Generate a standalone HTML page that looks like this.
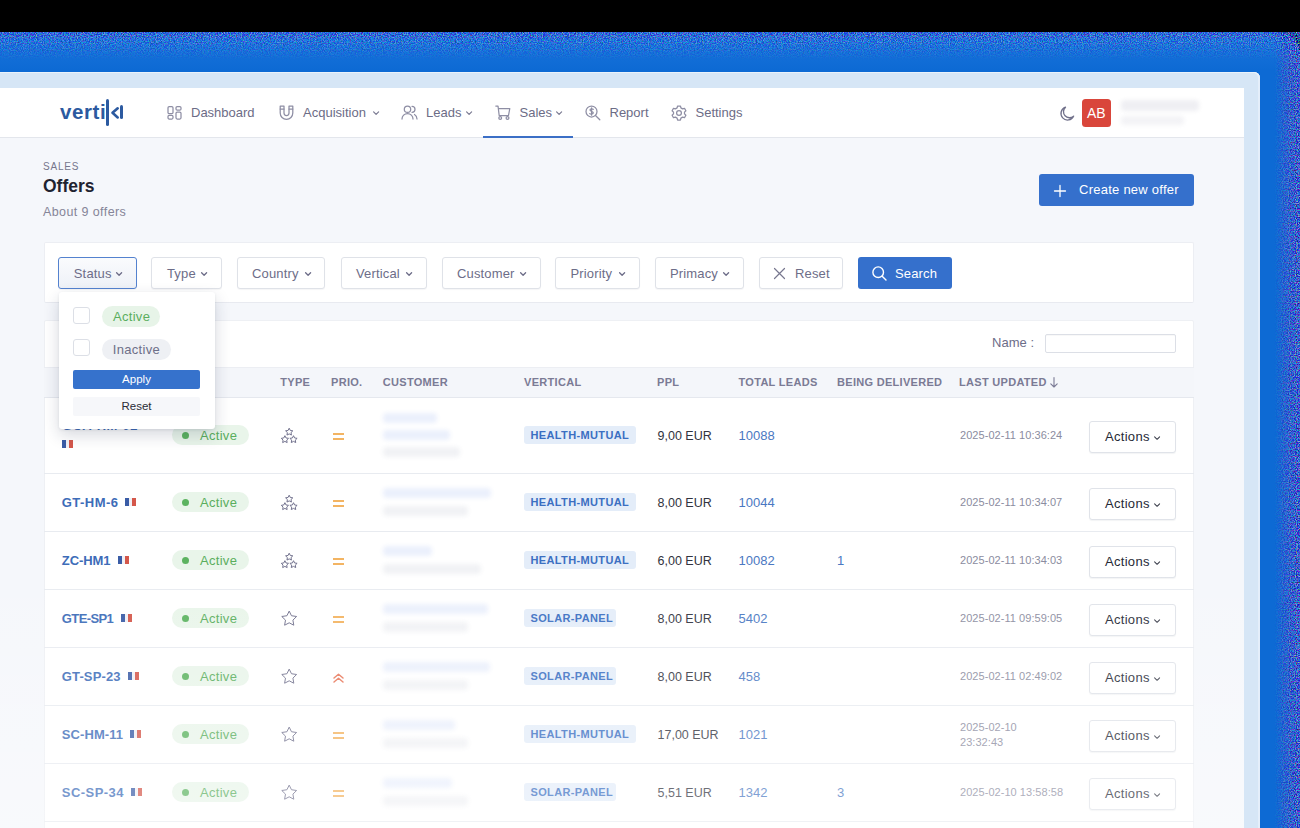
<!DOCTYPE html>
<html><head><meta charset="utf-8">
<style>
*{margin:0;padding:0;box-sizing:border-box}
html,body{width:1300px;height:828px;overflow:hidden;background:#000;font-family:"Liberation Sans",sans-serif;position:relative}
.a{position:absolute;white-space:nowrap}
#glow{left:-40px;top:32px;width:1340px;height:860px;background:linear-gradient(90deg,rgba(14,107,213,0) 0,rgba(14,107,213,0) 1316px,rgba(42,92,204,1) 1328px,rgba(58,76,192,1) 1340px),linear-gradient(180deg,#2378dd 0,#1570d9 18px,#0d6ad4 38px);border-top-right-radius:22px}
#glow2{display:none}
#glow3{left:0;top:32px;width:1300px;height:9px;background:linear-gradient(180deg,rgba(60,70,200,.5),rgba(60,70,200,0))}
#frame{left:-20px;top:72px;width:1280px;height:800px;background:#d6e6f6;border-top-right-radius:6px;box-shadow:inset 0 1px 0 #e9f2fb, inset -2px 0 0 #e4eefa}
#app{left:0;top:88px;width:1244px;height:760px;background:#f5f7fb}
#nav{left:0;top:88px;width:1244px;height:50px;background:#fff;border-bottom:1px solid #e3e6ec}
.nt{font-size:13px;line-height:16px;color:#6c6c86}
svg.ic{position:absolute;overflow:visible}
.ic *{stroke:#8e8ea4;fill:none;stroke-width:1.25;stroke-linecap:round;stroke-linejoin:round}
.chev{position:absolute;overflow:visible}
.chev *{stroke:#7a7a92;fill:none;stroke-width:1.2;stroke-linecap:round;stroke-linejoin:round}
</style>
<style>
.btn{position:absolute;height:32px;top:257px;border:1px solid #dfe2e8;border-radius:3px;background:#fff;box-shadow:0 1px 1px rgba(20,30,60,.04)}
.bt{position:absolute;font-size:13px;line-height:16px;letter-spacing:.15px;color:#6d6d88;top:265.5px}
.th{position:absolute;top:376px;font-size:11px;line-height:13px;font-weight:bold;letter-spacing:.3px;color:#7b7b95}
.nm{position:absolute;font-size:13px;line-height:16px;font-weight:bold;letter-spacing:.4px;color:#3d6cb8}
.flag{position:absolute;width:11px;height:7.5px;background:linear-gradient(90deg,#3a5ca6 0,#3a5ca6 34%,#f0f0f5 34%,#f0f0f5 66%,#d4574a 66%)}
.badge{position:absolute;left:172px;width:77px;height:20px;border-radius:10px;background:#e9f5ea}
.bdot{position:absolute;left:10px;top:6.5px;width:7px;height:7px;border-radius:50%;background:#5cb360}
.btx{position:absolute;left:28px;top:2.7px;font-size:13px;line-height:16px;letter-spacing:.3px;color:#5aae5e}
.bl{position:absolute;height:10px;border-radius:4px;filter:blur(2px)}
.tag{position:absolute;left:524px;height:18px;border-radius:3px;background:#e4edf9;font-size:11px;line-height:18px;font-weight:bold;letter-spacing:.36px;color:#3b6fc2;padding-left:6.5px}
.ppl{position:absolute;left:657.5px;font-size:12.5px;line-height:16px;color:#31333e}
.tl{position:absolute;left:738.5px;font-size:13px;line-height:16px;color:#4a78c2}
.dt{position:absolute;left:960px;font-size:11px;line-height:15px;letter-spacing:.05px;color:#8b8ca0}
.act{position:absolute;left:1089px;width:87px;height:32px;border:1px solid #e0e3e9;border-radius:3px;background:#fff;box-shadow:0 1px 1px rgba(20,30,60,.05)}
.atx{position:absolute;left:15px;top:7.6px;font-size:13px;line-height:16px;letter-spacing:.3px;color:#262936}
.rl{position:absolute;left:44px;width:1150px;height:1px;background:#e8ebf0}
</style>
</head><body>
<div id="glow" class="a"></div>
<div id="glow2" class="a"></div>
<div id="glow3" class="a"></div>
<div id="frame" class="a"></div>
<div id="app" class="a"></div>

<svg class="a" style="left:0;top:0" width="1300" height="828">
<defs>
<filter id="nz" x="0" y="0" width="100%" height="100%"><feTurbulence type="fractalNoise" baseFrequency="0.85" numOctaves="1" seed="7" result="t"/><feComponentTransfer in="t"><feFuncR type="linear" slope="5" intercept="-2.6"/><feFuncG type="linear" slope="5" intercept="-2.3"/><feFuncB type="linear" slope="4" intercept="-1.2"/><feFuncA type="linear" slope="0" intercept="1"/></feComponentTransfer></filter>
<linearGradient id="gt" x1="0" y1="0" x2="0" y2="1"><stop offset="0" stop-color="#fff" stop-opacity="0.9"/><stop offset="1" stop-color="#fff" stop-opacity="0"/></linearGradient>
<linearGradient id="gr" x1="0" y1="0" x2="1" y2="0"><stop offset="0" stop-color="#fff" stop-opacity="0"/><stop offset="1" stop-color="#fff" stop-opacity="0.9"/></linearGradient>
<mask id="mt"><rect x="0" y="32" width="1300" height="28" fill="url(#gt)"/></mask>
<mask id="mr"><rect x="1274" y="32" width="26" height="796" fill="url(#gr)"/></mask>
</defs>
<rect x="0" y="32" width="1300" height="28" filter="url(#nz)" mask="url(#mt)" opacity="0.5"/>
<rect x="1274" y="32" width="26" height="796" filter="url(#nz)" mask="url(#mr)" opacity="0.6"/>
</svg>
<!-- NAV -->
<div id="nav" class="a"></div>
<div class="a" style="left:60px;top:100px;font-size:20.5px;line-height:24px;font-weight:bold;letter-spacing:0.6px;color:#2c5aa0">verti</div>
<div class="a" style="left:106.4px;top:99.2px;width:3.1px;height:27.2px;border-radius:2px;background:#2c5aa0"></div>
<svg class="a" style="left:110.5px;top:106.5px;overflow:visible" width="10" height="14"><polyline points="6.7,1.3 1.5,5.85 6.7,10.4" fill="none" stroke="#2c5aa0" stroke-width="2.6" stroke-linecap="round" stroke-linejoin="round"/></svg>
<div class="a" style="left:120.3px;top:104.5px;width:2.7px;height:14.2px;border-radius:1.5px;background:#2c5aa0"></div>

<svg class="ic" style="left:167px;top:106px" width="15" height="14" viewBox="0 0 15 14"><rect x="1" y="0.6" width="5" height="7" rx="1.2"/><rect x="9" y="0.6" width="5" height="3.6" rx="1.2"/><rect x="1" y="9.4" width="5" height="3.6" rx="1.2"/><rect x="9" y="6" width="5" height="7" rx="1.2"/></svg>
<div class="a nt" style="left:191px;top:105px">Dashboard</div>

<svg class="ic" style="left:279px;top:105px" width="15" height="15" viewBox="0 0 15 15"><path d="M1.2,1 H5 V8 A2.5,2.5 0 0 0 10,8 V1 H13.8 V8 A6.3,6.3 0 0 1 1.2,8 Z"/><path d="M1.2,4 H5 M10,4 H13.8"/></svg>
<div class="a nt" style="left:303px;top:105px">Acquisition</div>
<svg class="chev" style="left:372.5px;top:110.5px" width="7" height="5"><polyline points="0.6,0.8 3.1,3.3 5.6,0.8"/></svg>

<svg class="ic" style="left:401px;top:105px" width="17" height="15" viewBox="0 0 17 15"><circle cx="6.5" cy="4.2" r="3.2"/><path d="M1,14 A5.5,5.5 0 0 1 12,14"/><path d="M11,1.3 A3,3 0 0 1 11,7.3 M13.5,9.5 A5.2,5.2 0 0 1 16,14"/></svg>
<div class="a nt" style="left:426px;top:105px">Leads</div>
<svg class="chev" style="left:465.5px;top:110.5px" width="7" height="5"><polyline points="0.6,0.8 3.1,3.3 5.6,0.8"/></svg>

<svg class="ic" style="left:495px;top:105px" width="16" height="15" viewBox="0 0 16 15"><path d="M0.8,1 H3 L4.2,10.5 H13.5 L14.8,3.5 H3.6"/><circle cx="5.2" cy="13" r="1.4"/><circle cx="12.5" cy="13" r="1.4"/></svg>
<div class="a nt" style="left:519.5px;top:105px">Sales</div>
<svg class="chev" style="left:555.5px;top:110.5px" width="7" height="5"><polyline points="0.6,0.8 3.1,3.3 5.6,0.8"/></svg>
<div class="a" style="left:483px;top:136px;width:90px;height:2px;background:#3b6fc6"></div>

<svg class="ic" style="left:584.5px;top:105px" width="16" height="16" viewBox="0 0 16 16"><circle cx="6.5" cy="6.5" r="5.5"/><path d="M10.5,10.5 L14.8,14.8"/><path d="M8.3,4.3 C7.8,3.6 5,3.4 5,5 C5,6.6 8.3,6 8.3,7.8 C8.3,9.5 5.3,9.3 4.8,8.6 M6.6,2.8 V10.2"/></svg>
<div class="a nt" style="left:609.5px;top:105px">Report</div>

<svg class="ic" style="left:670.5px;top:105px" width="16" height="16" viewBox="0 0 16 16"><path d="M6.6,1 H9.4 L9.9,2.9 L11.6,3.9 L13.5,3.3 L14.9,5.7 L13.5,7.1 V8.9 L14.9,10.3 L13.5,12.7 L11.6,12.1 L9.9,13.1 L9.4,15 H6.6 L6.1,13.1 L4.4,12.1 L2.5,12.7 L1.1,10.3 L2.5,8.9 V7.1 L1.1,5.7 L2.5,3.3 L4.4,3.9 L6.1,2.9 Z"/><circle cx="8" cy="8" r="2.4"/></svg>
<div class="a nt" style="left:695.5px;top:105px">Settings</div>

<svg class="ic" style="left:1059px;top:105.5px" width="16" height="16" viewBox="0 0 16 16"><path d="M6.5,1.2 A6.6,6.6 0 1 0 14.6,10.2 A5.6,5.6 0 0 1 6.5,1.2 Z" style="stroke:#70708a;stroke-width:1.3"/></svg>
<div class="a" style="left:1082px;top:98.5px;width:28.5px;height:28.5px;border-radius:3.5px;background:#d9463b;color:#fff;font-size:14px;line-height:28.5px;text-align:center">AB</div>
<div class="a" style="left:1121px;top:100px;width:78px;height:11px;border-radius:4px;background:#efeff3;filter:blur(2px)"></div>
<div class="a" style="left:1121px;top:116px;width:63px;height:9px;border-radius:4px;background:#f3f3f6;filter:blur(2px)"></div>

<div class="a" style="left:43px;top:160.5px;font-size:10px;line-height:12px;letter-spacing:.8px;color:#76768c">SALES</div>
<div class="a" style="left:43px;top:176.2px;font-size:17.5px;line-height:20px;font-weight:bold;color:#1f2330">Offers</div>
<div class="a" style="left:43px;top:204.7px;font-size:12.5px;line-height:15px;letter-spacing:.4px;color:#858598">About 9 offers</div>
<div class="a" style="left:1039px;top:174px;width:155px;height:32px;border-radius:3px;background:#3570cc"></div>
<svg class="a" style="left:1053.5px;top:184.5px;overflow:visible" width="12" height="12"><path d="M6,0.5 V11.5 M0.5,6 H11.5" stroke="#fff" stroke-width="1.3" stroke-linecap="round"/></svg>
<div class="a" style="left:1079px;top:182px;font-size:13px;line-height:16px;letter-spacing:.25px;color:#fff">Create new offer</div>
<div class="a" style="left:44px;top:242px;width:1150px;height:61px;background:#fff;border:1px solid #eceef3;border-bottom-color:#e8eaf0;border-radius:2px"></div>
<div class="btn" style="left:58px;width:79px;border-color:#5482cf;background:linear-gradient(#fafbfd,#eef1f7)"></div>
<div class="bt" style="left:73.8px">Status</div>
<svg class="a" style="left:115.5px;top:272px;overflow:visible" width="7" height="5"><polyline points="0.6,0.8 3.1,3.3 5.6,0.8" fill="none" stroke="#6d6d88" stroke-width="1.3" stroke-linecap="round" stroke-linejoin="round"/></svg>
<div class="btn" style="left:151px;width:71px"></div>
<div class="bt" style="left:167px">Type</div>
<svg class="a" style="left:200.5px;top:272px;overflow:visible" width="7" height="5"><polyline points="0.6,0.8 3.1,3.3 5.6,0.8" fill="none" stroke="#6d6d88" stroke-width="1.3" stroke-linecap="round" stroke-linejoin="round"/></svg>
<div class="btn" style="left:237px;width:88px"></div>
<div class="bt" style="left:252px">Country</div>
<svg class="a" style="left:304.5px;top:272px;overflow:visible" width="7" height="5"><polyline points="0.6,0.8 3.1,3.3 5.6,0.8" fill="none" stroke="#6d6d88" stroke-width="1.3" stroke-linecap="round" stroke-linejoin="round"/></svg>
<div class="btn" style="left:341px;width:86px"></div>
<div class="bt" style="left:356px">Vertical</div>
<svg class="a" style="left:405.5px;top:272px;overflow:visible" width="7" height="5"><polyline points="0.6,0.8 3.1,3.3 5.6,0.8" fill="none" stroke="#6d6d88" stroke-width="1.3" stroke-linecap="round" stroke-linejoin="round"/></svg>
<div class="btn" style="left:442px;width:99px"></div>
<div class="bt" style="left:457px">Customer</div>
<svg class="a" style="left:519.5px;top:272px;overflow:visible" width="7" height="5"><polyline points="0.6,0.8 3.1,3.3 5.6,0.8" fill="none" stroke="#6d6d88" stroke-width="1.3" stroke-linecap="round" stroke-linejoin="round"/></svg>
<div class="btn" style="left:555px;width:85px"></div>
<div class="bt" style="left:570.5px">Priority</div>
<svg class="a" style="left:618.5px;top:272px;overflow:visible" width="7" height="5"><polyline points="0.6,0.8 3.1,3.3 5.6,0.8" fill="none" stroke="#6d6d88" stroke-width="1.3" stroke-linecap="round" stroke-linejoin="round"/></svg>
<div class="btn" style="left:655px;width:89px"></div>
<div class="bt" style="left:670px">Primacy</div>
<svg class="a" style="left:722.5px;top:272px;overflow:visible" width="7" height="5"><polyline points="0.6,0.8 3.1,3.3 5.6,0.8" fill="none" stroke="#6d6d88" stroke-width="1.3" stroke-linecap="round" stroke-linejoin="round"/></svg>
<div class="btn" style="left:759px;width:84px"></div>
<svg class="a" style="left:774px;top:267.5px;overflow:visible" width="11" height="11"><path d="M0.5,0.5 L10.5,10.5 M10.5,0.5 L0.5,10.5" stroke="#77778f" stroke-width="1.2" stroke-linecap="round"/></svg>
<div class="bt" style="left:795px">Reset</div>
<div class="a" style="left:858px;top:257px;width:94px;height:32px;border-radius:3px;background:#3570cc"></div>
<svg class="a" style="left:871.5px;top:265.5px;overflow:visible" width="15" height="15"><circle cx="6.2" cy="6.2" r="5.3" fill="none" stroke="#fff" stroke-width="1.4"/><path d="M10.2,10.2 L14,14" stroke="#fff" stroke-width="1.4" stroke-linecap="round"/></svg>
<div class="bt" style="left:895px;color:#fff">Search</div>
<div class="a" style="left:44px;top:320px;width:1150px;height:520px;background:#fff;border:1px solid #eef0f4;border-radius:2px"></div>
<div class="a" style="left:992px;top:335px;font-size:13px;line-height:16px;letter-spacing:.05px;color:#6d6d88">Name :</div>
<div class="a" style="left:1045px;top:334px;width:131px;height:19px;border:1px solid #dcdfe6;border-radius:2px;background:#fff;box-shadow:inset 0 1px 1px rgba(0,0,0,.03)"></div>
<div class="a" style="left:44px;top:367px;width:1150px;height:31px;background:#f4f6fa;border-top:1px solid #eceef3;border-bottom:1px solid #e5e8ee"></div>
<div class="th" style="left:280.3px">TYPE</div>
<div class="th" style="left:331px">PRIO.</div>
<div class="th" style="left:382.8px">CUSTOMER</div>
<div class="th" style="left:524px">VERTICAL</div>
<div class="th" style="left:657px">PPL</div>
<div class="th" style="left:738.5px">TOTAL LEADS</div>
<div class="th" style="left:837px">BEING DELIVERED</div>
<div class="th" style="left:959px">LAST UPDATED</div>
<svg class="a" style="left:1050px;top:376.5px;overflow:visible" width="8" height="11"><path d="M4,0.5 V10 M0.8,6.8 L4,10 L7.2,6.8" fill="none" stroke="#7b7b95" stroke-width="1.1" stroke-linecap="round" stroke-linejoin="round"/></svg>
<div class="rl" style="top:473px"></div>
<div class="rl" style="top:531px"></div>
<div class="rl" style="top:589px"></div>
<div class="rl" style="top:647px"></div>
<div class="rl" style="top:705px"></div>
<div class="rl" style="top:763px"></div>
<div class="rl" style="top:821px"></div>
<div class="nm" style="left:62px;top:418px">GCA-HM-02</div>
<div class="flag" style="left:62.2px;top:440px"></div>
<div class="badge" style="top:425px"><div class="bdot"></div><div class="btx">Active</div></div>
<svg class="a" style="left:280.5px;top:427.5px;overflow:visible" width="17" height="16"><path d="M8.20,0.20 L9.32,2.46 L11.81,2.83 L10.01,4.59 L10.43,7.07 L8.20,5.90 L5.97,7.07 L6.39,4.59 L4.59,2.83 L7.08,2.46 Z M3.90,7.70 L5.02,9.96 L7.51,10.33 L5.71,12.09 L6.13,14.57 L3.90,13.40 L1.67,14.57 L2.09,12.09 L0.29,10.33 L2.78,9.96 Z M12.50,7.70 L13.62,9.96 L16.11,10.33 L14.31,12.09 L14.73,14.57 L12.50,13.40 L10.27,14.57 L10.69,12.09 L8.89,10.33 L11.38,9.96 Z" fill="none" stroke="#72728e" stroke-width="1.0" stroke-linejoin="round"/></svg>
<div class="a" style="left:333px;top:433.3px;width:11px;height:1.5px;background:#f3b462"></div>
<div class="a" style="left:333px;top:438.4px;width:11px;height:1.5px;background:#f3b462"></div>
<div class="bl" style="left:383px;top:412.5px;width:54px;background:#ebf0fc"></div>
<div class="bl" style="left:383px;top:430px;width:67px;background:#ebf0fc"></div>
<div class="bl" style="left:383px;top:447px;width:77px;background:#f1f2f5"></div>
<div class="tag" style="top:426px;width:112px">HEALTH-MUTUAL</div>
<div class="ppl" style="top:427.5px">9,00 EUR</div>
<div class="tl" style="top:427.5px">10088</div>
<div class="dt" style="top:428.2px">2025-02-11 10:36:24</div>
<div class="act" style="top:420.5px"><div class="atx">Actions</div></div>
<svg class="a" style="left:1154.2px;top:436.4px;overflow:visible" width="7" height="5"><polyline points="0.6,0.8 3.1,3.3 5.6,0.8" fill="none" stroke="#3a3d4a" stroke-width="1.05" stroke-linecap="round" stroke-linejoin="round"/></svg>
<div class="nm" style="left:61.8px;top:494.5px;letter-spacing:0.46px">GT-HM-6</div>
<div class="flag" style="left:125.2px;top:498.3px"></div>
<div class="badge" style="top:492px"><div class="bdot"></div><div class="btx">Active</div></div>
<svg class="a" style="left:280.5px;top:494.5px;overflow:visible" width="17" height="16"><path d="M8.20,0.20 L9.32,2.46 L11.81,2.83 L10.01,4.59 L10.43,7.07 L8.20,5.90 L5.97,7.07 L6.39,4.59 L4.59,2.83 L7.08,2.46 Z M3.90,7.70 L5.02,9.96 L7.51,10.33 L5.71,12.09 L6.13,14.57 L3.90,13.40 L1.67,14.57 L2.09,12.09 L0.29,10.33 L2.78,9.96 Z M12.50,7.70 L13.62,9.96 L16.11,10.33 L14.31,12.09 L14.73,14.57 L12.50,13.40 L10.27,14.57 L10.69,12.09 L8.89,10.33 L11.38,9.96 Z" fill="none" stroke="#72728e" stroke-width="1.0" stroke-linejoin="round"/></svg>
<div class="a" style="left:333px;top:500.3px;width:11px;height:1.5px;background:#f3b462"></div>
<div class="a" style="left:333px;top:505.4px;width:11px;height:1.5px;background:#f3b462"></div>
<div class="bl" style="left:383px;top:488.3px;width:108px;background:#ebf0fc"></div>
<div class="bl" style="left:383px;top:506.3px;width:85px;background:#f1f2f5"></div>
<div class="tag" style="top:493px;width:112px">HEALTH-MUTUAL</div>
<div class="ppl" style="top:494.5px">8,00 EUR</div>
<div class="tl" style="top:494.5px">10044</div>
<div class="dt" style="top:495.2px">2025-02-11 10:34:07</div>
<div class="act" style="top:487.5px"><div class="atx">Actions</div></div>
<svg class="a" style="left:1154.2px;top:503.4px;overflow:visible" width="7" height="5"><polyline points="0.6,0.8 3.1,3.3 5.6,0.8" fill="none" stroke="#3a3d4a" stroke-width="1.05" stroke-linecap="round" stroke-linejoin="round"/></svg>
<div class="nm" style="left:61.8px;top:552.5px;letter-spacing:-0.06px">ZC-HM1</div>
<div class="flag" style="left:117.8px;top:556.3px"></div>
<div class="badge" style="top:550px"><div class="bdot"></div><div class="btx">Active</div></div>
<svg class="a" style="left:280.5px;top:552.5px;overflow:visible" width="17" height="16"><path d="M8.20,0.20 L9.32,2.46 L11.81,2.83 L10.01,4.59 L10.43,7.07 L8.20,5.90 L5.97,7.07 L6.39,4.59 L4.59,2.83 L7.08,2.46 Z M3.90,7.70 L5.02,9.96 L7.51,10.33 L5.71,12.09 L6.13,14.57 L3.90,13.40 L1.67,14.57 L2.09,12.09 L0.29,10.33 L2.78,9.96 Z M12.50,7.70 L13.62,9.96 L16.11,10.33 L14.31,12.09 L14.73,14.57 L12.50,13.40 L10.27,14.57 L10.69,12.09 L8.89,10.33 L11.38,9.96 Z" fill="none" stroke="#72728e" stroke-width="1.0" stroke-linejoin="round"/></svg>
<div class="a" style="left:333px;top:558.3px;width:11px;height:1.5px;background:#f3b462"></div>
<div class="a" style="left:333px;top:563.4px;width:11px;height:1.5px;background:#f3b462"></div>
<div class="bl" style="left:383px;top:546.3px;width:49px;background:#ebf0fc"></div>
<div class="bl" style="left:383px;top:564.3px;width:98px;background:#f1f2f5"></div>
<div class="tag" style="top:551px;width:112px">HEALTH-MUTUAL</div>
<div class="ppl" style="top:552.5px">6,00 EUR</div>
<div class="tl" style="top:552.5px">10082</div>
<div class="tl" style="left:837px;top:552.5px">1</div>
<div class="dt" style="top:553.2px">2025-02-11 10:34:03</div>
<div class="act" style="top:545.5px"><div class="atx">Actions</div></div>
<svg class="a" style="left:1154.2px;top:561.4px;overflow:visible" width="7" height="5"><polyline points="0.6,0.8 3.1,3.3 5.6,0.8" fill="none" stroke="#3a3d4a" stroke-width="1.05" stroke-linecap="round" stroke-linejoin="round"/></svg>
<div class="nm" style="left:61.8px;top:610.5px;letter-spacing:-0.6px">GTE-SP1</div>
<div class="flag" style="left:121.0px;top:614.3px"></div>
<div class="badge" style="top:608px"><div class="bdot"></div><div class="btx">Active</div></div>
<svg class="a" style="left:280.5px;top:610px;overflow:visible" width="17" height="16"><path d="M8.20,1.10 L10.49,5.74 L15.62,6.49 L11.91,10.11 L12.78,15.21 L8.20,12.80 L3.62,15.21 L4.49,10.11 L0.78,6.49 L5.91,5.74 Z" fill="none" stroke="#72728e" stroke-width="1.0" stroke-linejoin="round"/></svg>
<div class="a" style="left:333px;top:616.3px;width:11px;height:1.5px;background:#f3b462"></div>
<div class="a" style="left:333px;top:621.4px;width:11px;height:1.5px;background:#f3b462"></div>
<div class="bl" style="left:383px;top:604.3px;width:105px;background:#ebf0fc"></div>
<div class="bl" style="left:383px;top:622.3px;width:85px;background:#f1f2f5"></div>
<div class="tag" style="top:609px;width:92px">SOLAR-PANEL</div>
<div class="ppl" style="top:610.5px">8,00 EUR</div>
<div class="tl" style="top:610.5px">5402</div>
<div class="dt" style="top:611.2px">2025-02-11 09:59:05</div>
<div class="act" style="top:603.5px"><div class="atx">Actions</div></div>
<svg class="a" style="left:1154.2px;top:619.4px;overflow:visible" width="7" height="5"><polyline points="0.6,0.8 3.1,3.3 5.6,0.8" fill="none" stroke="#3a3d4a" stroke-width="1.05" stroke-linecap="round" stroke-linejoin="round"/></svg>
<div class="nm" style="left:61.8px;top:668.5px;letter-spacing:0.13px">GT-SP-23</div>
<div class="flag" style="left:127.7px;top:672.3px"></div>
<div class="badge" style="top:666px"><div class="bdot"></div><div class="btx">Active</div></div>
<svg class="a" style="left:280.5px;top:668px;overflow:visible" width="17" height="16"><path d="M8.20,1.10 L10.49,5.74 L15.62,6.49 L11.91,10.11 L12.78,15.21 L8.20,12.80 L3.62,15.21 L4.49,10.11 L0.78,6.49 L5.91,5.74 Z" fill="none" stroke="#72728e" stroke-width="1.0" stroke-linejoin="round"/></svg>
<svg class="a" style="left:333px;top:672.5px;overflow:visible" width="11" height="10"><path d="M1,5 L5.5,1.2 L10,5 M1,9 L5.5,5.2 L10,9" fill="none" stroke="#e8775a" stroke-width="1.5" stroke-linecap="round" stroke-linejoin="round"/></svg>
<div class="bl" style="left:383px;top:662.3px;width:107px;background:#ebf0fc"></div>
<div class="bl" style="left:383px;top:680.3px;width:85px;background:#f1f2f5"></div>
<div class="tag" style="top:667px;width:92px">SOLAR-PANEL</div>
<div class="ppl" style="top:668.5px">8,00 EUR</div>
<div class="tl" style="top:668.5px">458</div>
<div class="dt" style="top:669.2px">2025-02-11 02:49:02</div>
<div class="act" style="top:661.5px"><div class="atx">Actions</div></div>
<svg class="a" style="left:1154.2px;top:677.4px;overflow:visible" width="7" height="5"><polyline points="0.6,0.8 3.1,3.3 5.6,0.8" fill="none" stroke="#3a3d4a" stroke-width="1.05" stroke-linecap="round" stroke-linejoin="round"/></svg>
<div class="nm" style="left:61.8px;top:726.5px;letter-spacing:0.09px">SC-HM-11</div>
<div class="flag" style="left:130.3px;top:730.3px"></div>
<div class="badge" style="top:724px"><div class="bdot"></div><div class="btx">Active</div></div>
<svg class="a" style="left:280.5px;top:726px;overflow:visible" width="17" height="16"><path d="M8.20,1.10 L10.49,5.74 L15.62,6.49 L11.91,10.11 L12.78,15.21 L8.20,12.80 L3.62,15.21 L4.49,10.11 L0.78,6.49 L5.91,5.74 Z" fill="none" stroke="#72728e" stroke-width="1.0" stroke-linejoin="round"/></svg>
<div class="a" style="left:333px;top:732.3px;width:11px;height:1.5px;background:#f3b462"></div>
<div class="a" style="left:333px;top:737.4px;width:11px;height:1.5px;background:#f3b462"></div>
<div class="bl" style="left:383px;top:720.3px;width:72px;background:#ebf0fc"></div>
<div class="bl" style="left:383px;top:738.3px;width:85px;background:#f1f2f5"></div>
<div class="tag" style="top:725px;width:112px">HEALTH-MUTUAL</div>
<div class="ppl" style="top:726.5px">17,00 EUR</div>
<div class="tl" style="top:726.5px">1021</div>
<div class="dt" style="top:719.5px">2025-02-10<br>23:32:43</div>
<div class="act" style="top:719.5px"><div class="atx">Actions</div></div>
<svg class="a" style="left:1154.2px;top:735.4px;overflow:visible" width="7" height="5"><polyline points="0.6,0.8 3.1,3.3 5.6,0.8" fill="none" stroke="#3a3d4a" stroke-width="1.05" stroke-linecap="round" stroke-linejoin="round"/></svg>
<div class="nm" style="left:61.8px;top:784.5px;letter-spacing:0.45px">SC-SP-34</div>
<div class="flag" style="left:130.7px;top:788.3px"></div>
<div class="badge" style="top:782px"><div class="bdot"></div><div class="btx">Active</div></div>
<svg class="a" style="left:280.5px;top:784px;overflow:visible" width="17" height="16"><path d="M8.20,1.10 L10.49,5.74 L15.62,6.49 L11.91,10.11 L12.78,15.21 L8.20,12.80 L3.62,15.21 L4.49,10.11 L0.78,6.49 L5.91,5.74 Z" fill="none" stroke="#72728e" stroke-width="1.0" stroke-linejoin="round"/></svg>
<div class="a" style="left:333px;top:790.3px;width:11px;height:1.5px;background:#f3b462"></div>
<div class="a" style="left:333px;top:795.4px;width:11px;height:1.5px;background:#f3b462"></div>
<div class="bl" style="left:383px;top:778.3px;width:69px;background:#ebf0fc"></div>
<div class="bl" style="left:383px;top:796.3px;width:85px;background:#f1f2f5"></div>
<div class="tag" style="top:783px;width:92px">SOLAR-PANEL</div>
<div class="ppl" style="top:784.5px">5,51 EUR</div>
<div class="tl" style="top:784.5px">1342</div>
<div class="tl" style="left:837px;top:784.5px">3</div>
<div class="dt" style="top:785.2px">2025-02-10 13:58:58</div>
<div class="act" style="top:777.5px"><div class="atx">Actions</div></div>
<svg class="a" style="left:1154.2px;top:793.4px;overflow:visible" width="7" height="5"><polyline points="0.6,0.8 3.1,3.3 5.6,0.8" fill="none" stroke="#3a3d4a" stroke-width="1.05" stroke-linecap="round" stroke-linejoin="round"/></svg>
<div class="nm" style="left:61.8px;top:842.5px;letter-spacing:0.2px">GT-SP-8</div>
<div class="flag" style="left:125.0px;top:846.3px"></div>
<div class="badge" style="top:840px"><div class="bdot"></div><div class="btx">Active</div></div>
<svg class="a" style="left:280.5px;top:842px;overflow:visible" width="17" height="16"><path d="M8.20,1.10 L10.49,5.74 L15.62,6.49 L11.91,10.11 L12.78,15.21 L8.20,12.80 L3.62,15.21 L4.49,10.11 L0.78,6.49 L5.91,5.74 Z" fill="none" stroke="#72728e" stroke-width="1.0" stroke-linejoin="round"/></svg>
<div class="a" style="left:333px;top:848.3px;width:11px;height:1.5px;background:#f3b462"></div>
<div class="a" style="left:333px;top:853.4px;width:11px;height:1.5px;background:#f3b462"></div>
<div class="bl" style="left:383px;top:836.3px;width:87px;background:#ebf0fc"></div>
<div class="bl" style="left:383px;top:854.3px;width:85px;background:#f1f2f5"></div>
<div class="tag" style="top:841px;width:92px">SOLAR-PANEL</div>
<div class="ppl" style="top:842.5px">8,00 EUR</div>
<div class="tl" style="top:842.5px">215</div>
<div class="dt" style="top:843.2px">2025-02-10 11:12:40</div>
<div class="act" style="top:835.5px"><div class="atx">Actions</div></div>
<svg class="a" style="left:1154.2px;top:851.4px;overflow:visible" width="7" height="5"><polyline points="0.6,0.8 3.1,3.3 5.6,0.8" fill="none" stroke="#3a3d4a" stroke-width="1.05" stroke-linecap="round" stroke-linejoin="round"/></svg>
<div class="a" style="left:59px;top:291.5px;width:156px;height:137.5px;background:#fff;border-radius:3px;box-shadow:0 6px 16px rgba(30,40,70,.18),0 1px 3px rgba(30,40,70,.08)"></div>
<div class="a" style="left:73px;top:306.5px;width:17px;height:17px;border:1px solid #dcdfe6;border-radius:3px;background:#fff"></div>
<div class="a" style="left:73px;top:338.5px;width:17px;height:17px;border:1px solid #dcdfe6;border-radius:3px;background:#fff"></div>
<div class="a" style="left:102px;top:306px;width:58px;height:21px;border-radius:10.5px;background:#e7f4e8"></div>
<div class="a" style="left:113px;top:309px;font-size:13px;line-height:16px;letter-spacing:.3px;color:#5aae5e">Active</div>
<div class="a" style="left:102px;top:339px;width:69px;height:21px;border-radius:10.5px;background:#eef0f4"></div>
<div class="a" style="left:112.8px;top:342px;font-size:13px;line-height:16px;letter-spacing:.3px;color:#6d6f88">Inactive</div>
<div class="a" style="left:73px;top:370px;width:127px;height:18.5px;border-radius:2px;background:#3672cc;color:#fff;font-size:11.5px;line-height:18.5px;text-align:center">Apply</div>
<div class="a" style="left:73px;top:397px;width:127px;height:18.5px;border-radius:2px;background:#f6f7fa;color:#2a2c36;font-size:11.5px;line-height:18.5px;text-align:center">Reset</div>
<div class="a" style="left:0;top:560px;width:1244px;height:268px;background:linear-gradient(180deg,rgba(255,255,255,0),rgba(255,255,255,.35))"></div>
</body></html>
